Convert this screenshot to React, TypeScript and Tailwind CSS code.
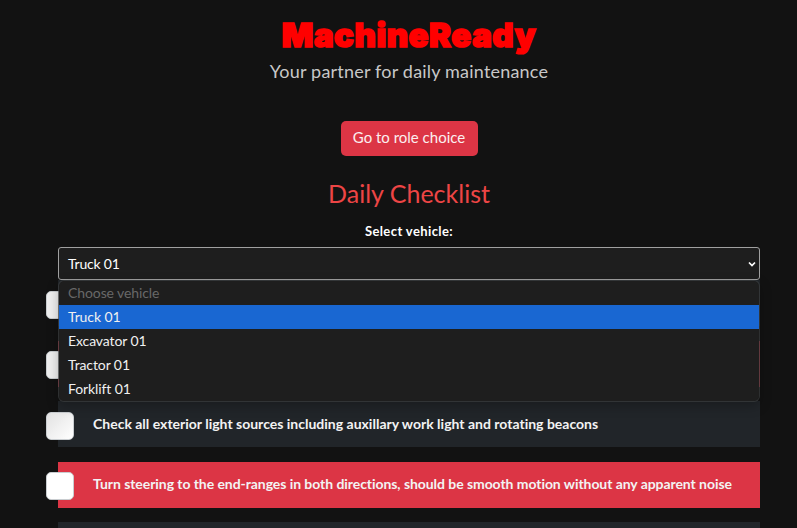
import type { ReactNode } from "react";

const options = ["Choose vehicle", "Truck 01", "Excavator 01", "Tractor 01", "Forklift 01"];

function CheckRow({ tone, box, text = "", children }: { tone: string; box: string; text?: string; children?: ReactNode }) {
  return (
    <div className={`flex h-[46px] shrink-0 items-center ${tone}`}>
      <span className={`-ml-3 mt-[3px] h-7 w-7 shrink-0 rounded-[5px] border border-[#c9cdd0] ${box}`} />
      <span className={`-mt-[2px] ml-[19px] whitespace-nowrap text-[14px] font-bold text-[#f3f3f3] ${text}`}>{children}</span>
    </div>
  );
}

export default function App() {
  return (
    <main className="h-[528px] w-[797px] overflow-hidden bg-[#121212] pl-[58px] font-['Lato',sans-serif] text-white [font-variant-ligatures:none]">
      <div className="flex w-[702px] flex-col">
        <header className="flex flex-col items-center">
          <h1 className="mt-[14px] h-[42px] whitespace-nowrap font-['Inter',sans-serif] text-[33px] leading-[42px] font-black tracking-[0.5px] text-[#ff0000] [-webkit-text-stroke:1.6px_#ff0000]">
            MachineReady
          </h1>
          <p className="mt-[2px] h-[26px] whitespace-nowrap text-[18px] leading-[26px] tracking-[0.2px] text-[#c8c8c8]">
            Your partner for daily maintenance
          </p>
          <button className="mt-[37px] h-[35px] w-[137px] rounded-[5px] bg-[#dc3545] pb-[2px] text-[15px] whitespace-nowrap text-[#fbeff0]">
            Go to role choice
          </button>
          <h2 className="mt-[21px] h-[33px] whitespace-nowrap text-[25px] leading-[32px] text-[#ed4545]">
            Daily Checklist
          </h2>
          <label className="mt-[11px] h-[20px] text-[13px] leading-[20px] font-bold tracking-[0.4px]">Select vehicle:</label>
        </header>

        <div className="relative mt-[6px] flex h-[33px] items-center justify-between rounded-[3px] border border-[#a0a0a0] bg-[#1e1e1e] pr-[3px] pl-[9px] text-[14px] tracking-[-0.2px]">
          <span>Truck 01</span>
          <svg className="h-2 w-2" viewBox="0 0 8 8" fill="none" stroke="white" strokeWidth="1.7">
            <path d="M1 2.5 4 5.5 7 2.5" />
          </svg>
          <ul className="absolute top-[32px] -left-px z-10 w-[702px] rounded-[6px] border border-[#3c3e40]/70 bg-[#1e1e1e] bg-clip-padding text-[14px] tracking-[-0.1px] shadow-[0_4px_12px_rgba(0,0,0,0.25)]">
            {options.map((name, i) => (
              <li
                key={name}
                className={`flex h-6 items-center pb-[2px] pl-[9px] ${i === 0 ? "text-[#686868]" : "text-[#f0f0f0]"} ${i === 1 ? "bg-[#1967d2]" : ""}`}
              >
                {name}
              </li>
            ))}
          </ul>
        </div>

        <section className="flex flex-col gap-[14.5px]">
          <CheckRow tone="bg-[#212529]" box="bg-[#f0f0f0]" />
          <CheckRow tone="bg-[#dc3545]" box="bg-[#f0f0f0]" />
          <CheckRow tone="bg-[#212529]" box="bg-gradient-to-br from-[#e2e2e2] to-white">
            Check all exterior light sources including auxillary work light and rotating beacons
          </CheckRow>
          <CheckRow tone="bg-[#dc3545]" box="bg-white" text="tracking-[-0.065px]">
            Turn steering to the end-ranges in both directions, should be smooth motion without any apparent noise
          </CheckRow>
          <CheckRow tone="bg-[#212529]" box="bg-white" />
        </section>
      </div>
    </main>
  );
}
